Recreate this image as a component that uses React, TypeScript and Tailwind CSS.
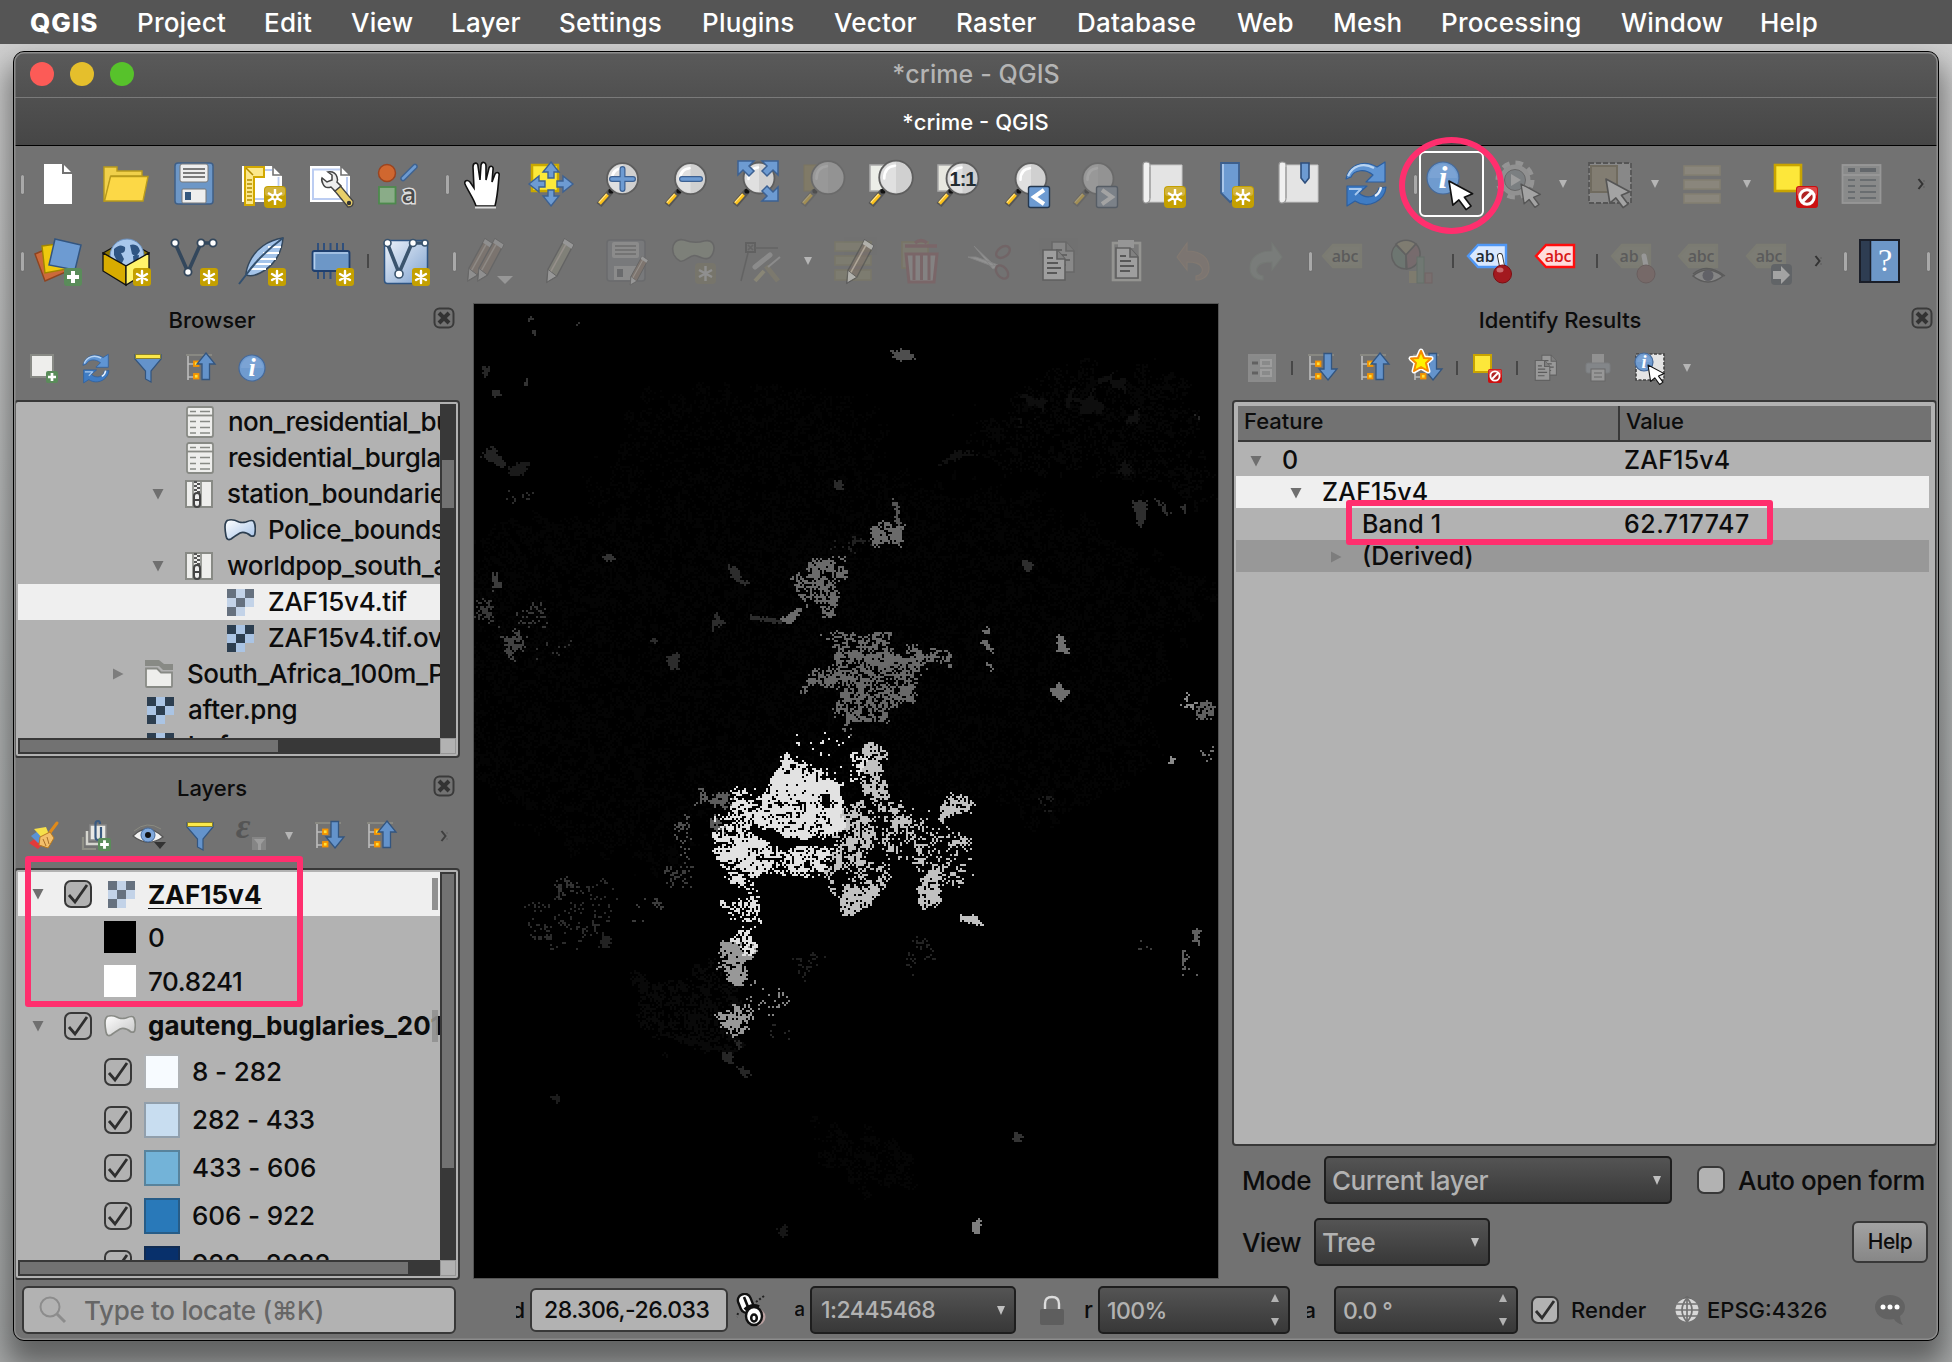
import React from "react";

type Kids = { children?: React.ReactNode };

/* ---------- icon primitives ---------- */

function Ico({ children, dim, faint, size = "lg" }: Kids & { dim?: boolean; faint?: boolean; size?: "lg" | "sm" }) {
  return (
    <svg
      viewBox={size === "lg" ? "0 0 48 48" : "0 0 32 32"}
      className={
        (size === "lg" ? "h-12 w-12 " : "h-8 w-8 ") + "shrink-0 overflow-visible " + (faint ? "opacity-20" : dim ? "opacity-35" : "")
      }
    >
      {children}
    </svg>
  );
}

function StarBadge({ x = 26, y = 26, s = 1 }: { x?: number; y?: number; s?: number }) {
  return (
    <g transform={`translate(${x} ${y}) scale(${s})`}>
      <rect width="22" height="22" rx="4" fill="#c4a000" />
      <rect x="1" y="1" width="20" height="9" rx="3" fill="#d2b43c" />
      <g stroke="#fff" strokeWidth="2.4">
        <path d="M11 3V19M4 7L18 15M18 7L4 15" />
      </g>
      <circle cx="11" cy="11" r="3.6" fill="#fff" />
      <circle cx="11" cy="11" r="1.5" fill="#c4a000" />
    </g>
  );
}

function SoftStar({ x = 30, y = 29 }: { x?: number; y?: number }) {
  return (
    <g transform={`translate(${x} ${y})`}>
      <rect width="18" height="18" rx="3" fill="#c4a000" />
      <g stroke="#fff" strokeWidth="2.4" strokeLinecap="round">
        <path d="M9 3V15M4 6L14 12M14 6L4 12" />
      </g>
    </g>
  );
}

function PlusBadge({ x, y, s }: { x: number; y: number; s: number }) {
  return (
    <g transform={`translate(${x} ${y}) scale(${s / 18})`}>
      <rect width="18" height="18" rx="3" fill="#5a8c5a" />
      <path d="M9 3V15M3 9H15" stroke="#fff" strokeWidth="4" />
    </g>
  );
}

function Cursor({ x, y, s = 1, fill = "#fff", stroke = "#111" }: { x: number; y: number; s?: number; fill?: string; stroke?: string }) {
  return (
    <path
      transform={`translate(${x} ${y}) scale(${s})`}
      d="M0 0L3.5 22L9 17.2L15.5 26L20 22.8L14 14.8L21.5 11.5Z"
      fill={fill}
      stroke={stroke}
      strokeWidth="1.5"
      strokeLinejoin="round"
    />
  );
}

function Lens({ cx = 27.5, cy = 18.7, r = 15.5, children }: Kids & { cx?: number; cy?: number; r?: number }) {
  return (
    <g>
      <path d={`M4 45L16 31`} stroke="#555" strokeWidth="6.5" />
      <path d="M4.5 43.5L12.5 34.5" stroke="#fcc21b" strokeWidth="3.6" />
      <path d="M3.8 42.5L11.5 34" stroke="#ffe9a0" strokeWidth="1.1" />
      <circle cx="16" cy="31" r="2.6" fill="#111" />
      <circle cx={cx} cy={cy} r={r} fill="#d0d0d0" stroke="#5e5e5e" strokeWidth="1.8" />
      <path
        d={`M${cx} ${cy - r + 1.5}A${r - 1.5} ${r - 1.5} 0 0 0 ${cx} ${cy + r - 1.5}Z`}
        fill="#e0e0e0"
      />
      <path d={`M${cx - r + 5} ${cy + 1}Q${cx - r + 5} ${cy - r + 6} ${cx - 1} ${cy - r + 5}`} stroke="#fff" strokeWidth="2.6" fill="none" strokeLinecap="round" />
      {children}
    </g>
  );
}

function Floppy() {
  return (
    <g>
      <rect x="5" y="3" width="38" height="41" rx="3" fill="#6d97c7" stroke="#3f5f87" strokeWidth="1.5" />
      <rect x="10" y="4" width="28" height="18" rx="2" fill="#eee" stroke="#777" />
      <path d="M13 9H35M13 13H35M13 17H35" stroke="#555" strokeWidth="1.6" />
      <rect x="12" y="29" width="24" height="14" rx="1" fill="#eee" stroke="#777" />
      <rect x="15" y="32" width="6" height="8" fill="#35587e" />
    </g>
  );
}

function Pencil({ x = 0, y = 0, s = 1, fill = "#8d7a6a" }: { x?: number; y?: number; s?: number; fill?: string }) {
  return (
    <g transform={`translate(${x} ${y}) scale(${s})`}>
      <path d="M20 2L29 8L12 40L2 46L3 33Z" fill={fill} stroke="#4a4a4a" strokeWidth="1.4" />
      <path d="M3 33L12 40L2 46Z" fill="#ddd" stroke="#4a4a4a" />
      <path d="M20 2L29 8L27 12L18 6Z" fill="#ddd" />
      <path d="M21 8L6 35" stroke="#d9c9b9" strokeWidth="1.6" />
    </g>
  );
}

function RefreshShape() {
  return (
    <g stroke="#2d5f9f" strokeWidth="1.2" strokeLinejoin="round">
      <path d="M3 19C5 7 19 -2 34 7L42 2V22H23L30 15C22 8 11 10 8 17Z" fill="#5f95d4" />
      <path d="M5 16C9 6 20 2 31 8" stroke="#b8d4f2" strokeWidth="2.2" fill="none" />
      <path d="M43 27C42 40 26 50 12 41L4 46V26H24L16 33C24 40 34 37 36 28Z" fill="#3f7cc4" />
      <path d="M6 29H18L12 35" stroke="#a9c9ee" strokeWidth="1.8" fill="none" />
      <path d="M32 36Q37 33 38 27" stroke="#e8f0fa" strokeWidth="2.4" fill="none" />
    </g>
  );
}

function InfoDisc({ cx, cy, r }: { cx: number; cy: number; r: number }) {
  return (
    <g>
      <circle cx={cx} cy={cy} r={r} fill="#6f9bcf" stroke="#45699a" strokeWidth="1.2" />
      <path d={`M${cx - r + 2} ${cy}A${r - 2} ${r - 2} 0 0 1 ${cx + r - 2} ${cy}Z`} fill="#7ba3d4" />
      <text x={cx} y={cy + r * 0.64} textAnchor="middle" fontFamily="Liberation Serif, serif" fontStyle="italic" fontWeight="700" fontSize={r * 2} fill="#fff">
        i
      </text>
    </g>
  );
}

function Scroll() {
  return (
    <g>
      <path d="M9 5H43V42H9Z" fill="#e4e4e4" stroke="#c6c6c6" />
      <path d="M4 5Q4 2 7 2Q11 2 11 5V38Q11 43 7 43Q3.500 43 4 38Z" fill="#f0f0f0" stroke="#999" strokeWidth="1.2" />
      <path d="M11 7V38" stroke="#aaa" strokeWidth="1.5" />
    </g>
  );
}

function NoBadge({ x, y, s }: { x: number; y: number; s: number }) {
  return (
    <g transform={`translate(${x} ${y}) scale(${s / 22})`}>
      <rect width="22" height="22" rx="3" fill="#cc0f0f" />
      <rect x="1" y="1" width="20" height="9" rx="2" fill="#dd4a4a" />
      <circle cx="11" cy="11" r="7.2" fill="#b02222" stroke="#fff" strokeWidth="3" />
      <path d="M6 16L16 6" stroke="#fff" strokeWidth="3.2" />
    </g>
  );
}

function Tag({ text, fill, stroke, color }: { text: string; fill: string; stroke: string; color: string }) {
  return (
    <g>
      <path d="M2 18L12 7H40V29H12Z" fill={fill} stroke={stroke} strokeWidth="2.4" />
      <text x="24" y="24" textAnchor="middle" fontFamily="Open Sans, sans-serif" fontWeight="600" fontSize="16" letterSpacing="-0.3" fill={color}>
        {text}
      </text>
    </g>
  );
}

function Doc({ x, y }: { x: number; y: number }) {
  return (
    <g transform={`translate(${x} ${y})`}>
      <path d="M0 0H14L22 9V30H0Z" fill="#e0e0e0" stroke="#444" strokeWidth="1.6" />
      <path d="M14 0V9H22" fill="#999" stroke="#444" strokeWidth="1.6" />
      <path d="M4 8H10M4 13H15M4 18H18M4 23H14" stroke="#333" strokeWidth="1.8" />
    </g>
  );
}

function VNodes({ color = "#33475c" }: { color?: string }) {
  return (
    <g stroke={color} strokeWidth="3.6" fill="none">
      <path d="M5 8L18 37L31 8H44" />
      <g fill="#fff" strokeWidth="1.8">
        <circle cx="5" cy="8" r="3.6" />
        <circle cx="18" cy="37" r="3.6" />
        <circle cx="31" cy="8" r="3.6" />
        <circle cx="43" cy="8" r="3.6" />
      </g>
    </g>
  );
}

/* ---------- toolbar pieces ---------- */

function Cell({ children }: Kids) {
  return <div className="flex w-[68px] shrink-0 items-center justify-center">{children}</div>;
}

function Handle({ className }: { className: string }) {
  return (
    <div className={"flex shrink-0 items-center justify-end " + className}>
      <div className="h-[19px] w-[3px] rounded-full bg-[#a9a9a9] shadow-[0_0_1px_#555]" />
    </div>
  );
}

function Sep({ className }: { className: string }) {
  return (
    <div className={"flex shrink-0 items-center justify-center " + className}>
      <div className="h-[14px] w-[2px] bg-[#474747]" />
    </div>
  );
}

function Drop({ className, color = "#b5b5b5" }: { className: string; color?: string }) {
  return (
    <div className={"flex shrink-0 items-center justify-center " + className}>
      <svg viewBox="0 0 8 8" className="h-2 w-2">
        <path d="M0 0H8L4 8Z" fill={color} />
      </svg>
    </div>
  );
}

function More({ className }: { className: string }) {
  return (
    <div className={"flex shrink-0 items-center justify-center " + className}>
      <svg viewBox="0 0 8 12" className="h-3 w-2">
        <path d="M1.500 1L5.500 6L1.500 11" stroke="#333" strokeWidth="2" fill="none" />
        <path d="M7 2V4M7 8V10" stroke="#606060" strokeWidth="1.200" />
      </svg>
    </div>
  );
}

function ToolbarOne() {
  return (
    <div className="flex h-[76px] items-center">
      <Handle className="w-[10px]" />
      <Cell><Ico><path d="M10 4H28V14H38V44H10Z" fill="#fff" /><path d="M30 5L37 12H30Z" fill="#fff" /></Ico></Cell>
      <Cell>
        <Ico>
          <path d="M2 7H15V11H40V16H9L3 41H2Z" fill="#f0d04a" stroke="#b89a1c" strokeWidth="1.4" />
          <path d="M8.500 16.500H46L41 41H2.500Z" fill="#fcd846" stroke="#b89a1c" strokeWidth="1.4" />
        </Ico>
      </Cell>
      <Cell><Ico><Floppy /></Ico></Cell>
      <Cell>
        <Ico>
          <path d="M4 6H34L44 16V42H4Z" fill="#fff" />
          <path d="M35 6V15H44Z" fill="#fff" stroke="#727272" strokeWidth="1.6" />
          <path d="M8 10H34M40.500 17V39H8" stroke="#bccdf2" strokeWidth="1.8" fill="none" />
          <path d="M7 7H26V17H16V45H7Z" fill="#fce88a" stroke="#d2a800" strokeWidth="2" />
          <path d="M8 8L15 15M9 20H14M9 24H14M9 28H14M9 32H14M9 36H14M9 40H14" stroke="#b08a00" strokeWidth="1.5" />
          <StarBadge />
        </Ico>
      </Cell>
      <Cell>
        <Ico>
          <path d="M4 6H34L44 16V42H4Z" fill="#fff" />
          <path d="M35 6V15H44Z" fill="#fff" stroke="#727272" strokeWidth="1.600" />
          <path d="M34 9.500H7V39H41V17" stroke="#bccdf2" strokeWidth="2" fill="none" />
          <path d="M28 30L34 25.500L47 41Q48 47 42 47Z" fill="#e8cf6a" stroke="#444" strokeWidth="1.300" />
          <circle cx="43" cy="43" r="2.200" fill="#333" />
          <path d="M22 12Q29 11 31 17Q32 20 31 22L35 26L29 31L25 27Q19 29 17 24Q15 20 16 18L21 22L26 20V15Z" fill="#eee" stroke="#444" strokeWidth="1.500" />
        </Ico>
      </Cell>
      <Cell>
        <Ico>
          <circle cx="13" cy="13" r="8.500" fill="#d0672f" stroke="#9a4420" strokeWidth="1.500" />
          <path d="M29 18.500L41 6.500" stroke="#3f6390" strokeWidth="5.500" strokeLinecap="round" />
          <path d="M29 18.500L41 6.500" stroke="#6d9bd2" strokeWidth="2.600" strokeLinecap="round" />
          <rect x="5" y="27" width="16.500" height="16.500" fill="#8aac88" stroke="#4d8a4d" strokeWidth="1.800" />
          <text x="35" y="43" textAnchor="middle" fontFamily="Open Sans, sans-serif" fontWeight="600" fontSize="25" fill="#4a4a4a" stroke="#ddd" strokeWidth="3" paintOrder="stroke">a</text>
        </Ico>
      </Cell>
      <Handle className="w-[17px]" />
      <Cell>
        <Ico>
          <path d="M17 46C15 39 9 31 6 24C5 21 8 19 11 22L15 28L14 7C14 2 19 2 19 6L21 20L22 5C23 1 27 2 27 6V20L30 8C31 5 35 6 34 10L33 22L36 14C38 11 41 13 40 16C39 26 39 34 36 46Z" fill="#fff" stroke="#111" strokeWidth="1.600" />
          <path d="M16 47.500H37" stroke="#ddd" strokeWidth="2" />
        </Ico>
      </Cell>
      <Cell>
        <Ico>
          <rect x="5" y="5" width="26" height="26" fill="#fde93a" stroke="#c9a800" strokeWidth="2.500" />
          <g fill="#6d9bd2" stroke="#3d6192" strokeWidth="1.400">
            <path d="M24 2L32 12H27V18H21V12H16Z" />
            <path d="M24 46L32 36H27V30H21V36H16Z" />
            <path d="M2 24L12 16V21H18V27H12V32Z" />
            <path d="M46 24L36 16V21H30V27H36V32Z" />
          </g>
        </Ico>
      </Cell>
      <Cell>
        <Ico>
          <Lens>
            <path d="M27.500 9V29M17 19H38" stroke="#3d6192" strokeWidth="6" strokeLinecap="round" />
            <path d="M27.500 9V29M17 19H38" stroke="#6d9bd2" strokeWidth="3.600" strokeLinecap="round" />
          </Lens>
        </Ico>
      </Cell>
      <Cell>
        <Ico>
          <Lens>
            <path d="M19 19H37" stroke="#3d6192" strokeWidth="6" strokeLinecap="round" />
            <path d="M19 19H37" stroke="#6d9bd2" strokeWidth="3.600" strokeLinecap="round" />
          </Lens>
        </Ico>
      </Cell>
      <Cell>
        <Ico>
          <Lens cx={28} cy={18} />
          <g fill="#6d9bd2" stroke="#3d6192" strokeWidth="1.500">
            <path d="M7 1H23L18 6L23 11L18 16L12 10L7 15Z" />
            <path d="M47 1H31L36 6L31 11L36 16L42 10L47 15Z" />
            <path d="M47 41H31L36 36L31 31L36 26L42 32L47 27Z" />
          </g>
        </Ico>
      </Cell>
      <Cell><Ico dim><rect x="5" y="5" width="24" height="26" fill="#9b8a55" stroke="#8a7a40" /><Lens cx={29} cy={17.700} r={16.500} /></Ico></Cell>
      <Cell><Ico><rect x="3" y="5" width="24" height="26" fill="#eceee8" stroke="#aaa" strokeWidth="1.500" /><Lens cx={29} cy={17.500} r={16.800} /></Ico></Cell>
      <Cell>
        <Ico>
          <rect x="3" y="5" width="24" height="26" fill="#e8e8e0" stroke="#aaa" strokeWidth="1.500" />
          <Lens cx={27.500} cy={18.500} r={16}>
            <text x="27.500" y="25.500" textAnchor="middle" fontFamily="Liberation Sans, sans-serif" fontWeight="700" fontSize="20" letterSpacing="-1" fill="#222b30">1:1</text>
          </Lens>
        </Ico>
      </Cell>
      <Cell>
        <Ico>
          <Lens cx={28} cy={18.700} />
          <rect x="25.500" y="26.500" width="21" height="21" rx="2" fill="#6d9bd2" stroke="#25384f" strokeWidth="1.400" />
          <path d="M41 30L31 37L41 44" stroke="#fff" strokeWidth="4" fill="none" />
        </Ico>
      </Cell>
      <Cell>
        <Ico dim>
          <Lens cx={27} cy={18.700} />
          <rect x="25.500" y="26.500" width="21" height="21" rx="2" fill="#8d9db2" stroke="#25384f" strokeWidth="1.400" />
          <path d="M31 30L41 37L31 44" stroke="#fff" strokeWidth="4" fill="none" />
        </Ico>
      </Cell>
      <Cell><Ico><Scroll /><StarBadge x={25} /></Ico></Cell>
      <Cell>
        <Ico>
          <path d="M14 3H32V36L23 42L14 33Z" fill="#6d9bd2" stroke="#3d5f8c" strokeWidth="1.800" />
          <path d="M16 4V32" stroke="#a9c6ea" strokeWidth="2" />
          <StarBadge x={25} />
        </Ico>
      </Cell>
      <Cell>
        <Ico>
          <Scroll />
          <path d="M26 3H34V18L30 23L26 18Z" fill="#6d9bd2" stroke="#2f4f7c" strokeWidth="1.600" />
        </Ico>
      </Cell>
      <Cell><Ico><RefreshShape /></Ico></Cell>
      <Handle className="w-4" />
      <div className="relative flex w-[68px] shrink-0 items-center justify-center">
        <div className="flex h-[66px] w-[65px] items-center justify-center rounded-[6px] border-2 border-white bg-[#6c6c6c]">
          <Ico><InfoDisc cx={16} cy={18} r={16} /><Cursor x={22} y={21} s={1.1} /></Ico>
        </div>
        <div className="absolute -top-[14px] -left-[18px] z-20 h-[97px] w-[105px] rounded-[50%] border-[6px] border-[#ff2f6e]" />
      </div>
      <div className="flex w-[66px] items-center justify-center">
        <Ico dim>
          <circle cx="21" cy="20" r="16" fill="none" stroke="#d5d5d5" strokeWidth="7" strokeDasharray="7 5.560" />
          <circle cx="21" cy="20" r="13" fill="#b9c0c8" stroke="#ccc" strokeWidth="5" />
          <circle cx="21" cy="20" r="10.500" fill="#8e979f" stroke="#555" />
          <path d="M17 14L27 20L17 26Z" fill="#eee" />
          <Cursor x={27} y={24} s={0.9} stroke="#222" />
        </Ico>
      </div>
      <Drop className="w-6" />
      <div className="flex w-[70px] items-center justify-center">
        <Ico dim>
          <rect x="3" y="3" width="42" height="40" fill="#ddd" fillOpacity=".6" stroke="#222" strokeWidth="1.800" strokeDasharray="5 2" />
          <rect x="5" y="6" width="26" height="26" fill="#a09274" stroke="#6d5f3c" strokeWidth="2" />
          <Cursor x={20} y={19} s={1.100} stroke="#222" />
        </Ico>
      </div>
      <Drop className="w-5" />
      <div className="flex w-[72px] items-center justify-center">
        <Ico dim>
          <g fill="#b8ab90" stroke="#a39670" strokeWidth="1.600">
            <rect x="7" y="6" width="36" height="9" /><rect x="7" y="20" width="36" height="9" /><rect x="7" y="34" width="36" height="9" />
          </g>
        </Ico>
      </div>
      <Drop className="w-5" />
      <div className="flex w-[74px] items-center justify-center">
        <Ico><rect x="5" y="5" width="26" height="26" fill="#fde73a" stroke="#c9a400" strokeWidth="2.600" /><NoBadge x={26} y={26} s={22} /></Ico>
      </div>
      <div className="flex w-[62px] items-center justify-center">
        <Ico dim>
          <rect x="4.500" y="5" width="38" height="38" fill="#b5b8b8" stroke="#ddd" strokeWidth="1.800" />
          <path d="M5 15H42" stroke="#ddd" strokeWidth="2" />
          <path d="M10 10H17M22 10H38" stroke="#4a5560" strokeWidth="4" />
          <path d="M10 20H17M22 20H38M10 26H17M22 26H38M10 32H17M22 32H38M10 38H17M22 38H38" stroke="#5a656e" strokeWidth="2" />
        </Ico>
      </div>
      <More className="ml-5 w-4" />
    </div>
  );
}

function ToolbarTwo() {
  return (
    <div className="flex h-[78px] items-center">
      <Handle className="w-[10px]" />
      <Cell>
        <Ico>
          <path d="M1 17L22 8L34 34L11 44Z" fill="#cc6a3a" stroke="#8e4420" strokeWidth="1.400" />
          <path d="M8 9L30 6L33 32L11 36Z" fill="#eec90e" stroke="#a08500" strokeWidth="1.400" />
          <path d="M21 2L47 8L41 33L15 28Z" fill="#6d9bd2" stroke="#33557f" strokeWidth="1.500" />
          <PlusBadge x={30} y={31} s={18} />
        </Ico>
      </Cell>
      <Cell>
        <Ico>
          <path d="M1 16L24 3L47 16L24 29Z" fill="#8a7400" stroke="#111" strokeWidth="1.300" />
          <circle cx="25" cy="19" r="17" fill="#a9c8ec" stroke="#6a8fbd" />
          <path d="M12 12Q18 6 23 10Q24 16 19 16L22 22L18 30Q14 22 12 18ZM28 8Q36 6 38 14L34 20L30 17ZM31 19L37 18L36 27L32 30Z" fill="#2f5583" />
          <path d="M1 16L24 29V48L1 34Z" fill="#d8ac00" stroke="#111" strokeWidth="1.300" />
          <path d="M47 16L24 29V48L47 34Z" fill="#fff36a" stroke="#111" strokeWidth="1.300" />
          <SoftStar x={31} y={31} />
        </Ico>
      </Cell>
      <Cell><Ico><g transform="translate(0 -2)"><VNodes /></g><SoftStar x={30} y={31} /></Ico></Cell>
      <Cell>
        <Ico>
          <path d="M45 1C30 3 18 12 12 24Q8 32 8 38Q14 40 22 36Q32 31 38 22Q44 13 45 1Z" fill="#a4c4ea" stroke="#33475c" strokeWidth="1.500" />
          <path d="M30 10H43M25 16H41M20 22H38M16 27H33M13 32H28" stroke="#fff" strokeWidth="2" />
          <path d="M45 1Q22 18 8 38L1 47" stroke="#33506f" strokeWidth="2" fill="none" />
          <SoftStar x={30} y={31} />
        </Ico>
      </Cell>
      <Cell>
        <Ico>
          <path d="M12 6V42M18 6V42M24.500 6V42M31 6V42M37 6V42" stroke="#2f4f7c" strokeWidth="2" />
          <rect x="6.500" y="14" width="37" height="20" rx="2" fill="#6d97c7" stroke="#1f3f6e" strokeWidth="1.800" />
          <path d="M8.500 32V16H42" stroke="#b3cdec" strokeWidth="1.600" fill="none" />
          <SoftStar x={30} y={31} />
        </Ico>
      </Cell>
      <Sep className="w-2" />
      <Cell>
        <Ico>
          <defs><linearGradient id="vl" x1="0" y1="0" x2="1" y2="1"><stop offset="0" stopColor="#eef3fa" /><stop offset="1" stopColor="#7ea2d0" /></linearGradient></defs>
          <rect x="2.500" y="3.500" width="43" height="43" rx="3" fill="url(#vl)" stroke="#2f5583" strokeWidth="1.500" />
          <path d="M6 8L17 36L30 6H44" stroke="#3a546e" strokeWidth="3.600" fill="none" />
          <g fill="#fff" stroke="#3a546e" strokeWidth="1.600"><circle cx="5.500" cy="6" r="3.500" /><circle cx="17" cy="37" r="4" /><circle cx="31" cy="6" r="3.500" /><circle cx="43" cy="6" r="3" /></g>
          <SoftStar x={30} y={31} />
        </Ico>
      </Cell>
      <Handle className="w-4" />
      <Cell>
        <Ico dim>
          <g opacity=".8"><Pencil x={0} y={0} s={0.95} fill="#957b6a" /><Pencil x={10} y={0} s={0.95} fill="#957b6a" /></g>
          <path d="M31 39H47L39 47Z" fill="#ddd" />
        </Ico>
      </Cell>
      <Cell><Ico dim><Pencil x={11} y={0} s={0.98} fill="#9a9a85" /></Ico></Cell>
      <Cell>
        <Ico dim>
          <rect x="5" y="3" width="38" height="41" rx="3" fill="#84888c" stroke="#5c5f66" strokeWidth="1.500" />
          <rect x="10" y="5" width="27" height="16" rx="2" fill="#bbb" /><path d="M13 9H34M13 13H34M13 17H34" stroke="#666" strokeWidth="1.600" />
          <rect x="12" y="29" width="23" height="14" fill="#bbb" /><rect x="15" y="32" width="6" height="8" fill="#5c6066" />
          <Pencil x={27} y={18} s={0.65} fill="#957b6a" />
        </Ico>
      </Cell>
      <Cell>
        <Ico dim>
          <path d="M4 18C0 8 6 1 14 3C22 6 28 6 34 4C42 2 46 8 43 16C40 24 34 22 27 19C20 16 16 26 10 24Q6 22 4 18Z" fill="#929a88" stroke="#555" strokeWidth="1.600" />
          <g opacity=".6"><rect x="25" y="26" width="21" height="21" rx="4" fill="#8f8555" /><path d="M35.500 29V44M29 33L42 40M42 33L29 40" stroke="#fff" strokeWidth="2.400" /></g>
        </Ico>
      </Cell>
      <Cell>
        <Ico dim>
          <rect x="8" y="6" width="9" height="9" fill="none" stroke="#444" strokeWidth="2" />
          <path d="M10 8L15 13M15 8L10 13M17 11H40M10 16L3 44" stroke="#4a4a4a" strokeWidth="1.600" />
          <path d="M17 44L26 34" stroke="#b5ab80" strokeWidth="4" /><path d="M28 29L40 44" stroke="#8f8868" strokeWidth="5" />
          <path d="M17 30L32 18" stroke="#bbb" strokeWidth="5" strokeLinecap="round" /><path d="M30 30L42 20" stroke="#bbb" strokeWidth="2" />
        </Ico>
      </Cell>
      <Drop className="w-6" />
      <Cell>
        <Ico dim>
          <g fill="#94906f" stroke="#85805a" strokeWidth="1.600"><rect x="5" y="5" width="36" height="9" /><rect x="5" y="19" width="36" height="9" /><rect x="5" y="33" width="36" height="10" /></g>
        </Ico>
        <div className="-ml-12 opacity-55"><Ico><Pencil x={15} y={1} s={0.98} fill="#7d7069" /></Ico></div>
      </Cell>
      <Cell>
        <Ico dim>
          <rect x="4" y="5" width="26" height="26" fill="#8f8a70" stroke="#857c50" strokeWidth="1.600" />
          <path d="M7 9H39M17 6Q23 1 29 6" stroke="#895058" strokeWidth="3.500" fill="none" />
          <path d="M8 17H39L36 45H11Z" fill="#a8a0a0" stroke="#895058" strokeWidth="3" />
          <path d="M16 18V43M23.500 18V43M31 18V43" stroke="#895058" strokeWidth="3" />
        </Ico>
      </Cell>
      <Cell>
        <Ico dim>
          <path d="M2 20H10L32 28L26 29ZM8 9L30 30L27 32Z" fill="#ccc" stroke="#aaa" />
          <ellipse cx="37" cy="15" rx="7.500" ry="5" transform="rotate(-35 37 15)" fill="none" stroke="#704c50" strokeWidth="2.400" />
          <ellipse cx="36" cy="35" rx="7.500" ry="5" transform="rotate(50 36 35)" fill="none" stroke="#704c50" strokeWidth="2.400" />
        </Ico>
      </Cell>
      <Cell><div className="opacity-40"><Ico><g opacity=".5"><Doc x={18} y={5} /></g><Doc x={9} y={13} /></Ico></div></Cell>
      <Cell>
        <div className="opacity-40">
          <Ico>
            <rect x="11" y="6" width="27" height="37" fill="#888" stroke="#c8c8c0" strokeWidth="2.600" />
            <rect x="16" y="3" width="16" height="8" fill="#ccc" /><Doc x={14} y={11} />
          </Ico>
        </div>
      </Cell>
      <Cell><Ico dim><path d="M7 20L17 6V14C31 14 39 21 39 31C39 39 33 43 26 43V39C32 38 33 34 32 31C30 26 25 25 17 25V33Z" fill="#8f7c70" stroke="#a08670" strokeWidth="1.200" /></Ico></Cell>
      <Cell><Ico dim><path d="M44 20L34 6V14C20 14 12 21 12 31C12 39 18 43 25 43V39C19 38 18 34 19 31C21 26 26 25 34 25V33Z" fill="#87918a" stroke="#7b867c" strokeWidth="1.200" /></Ico></Cell>
      <Handle className="w-4" />
      <Cell><Ico dim><g transform="translate(-1 1)"><Tag text="abc" fill="#8f8f7a" stroke="#8d8d72" color="#333" /></g></Ico></Cell>
      <Cell>
        <Ico dim>
          <path d="M16 18L16 32A14 14 0 0 1 6 8Z" fill="#647f70" stroke="#444" strokeWidth="1.600" />
          <path d="M16 18L6 7A15 15 0 0 1 26 7Z" fill="#98906f" stroke="#444" strokeWidth="1.600" />
          <path d="M16 18L26 7A15 15 0 0 1 17 32Z" fill="#806064" stroke="#444" strokeWidth="1.600" />
          <rect x="19" y="34" width="8" height="12" fill="#958d68" /><rect x="27" y="20" width="7" height="26" fill="#6f8575" stroke="#4c6a58" /><rect x="35" y="36" width="7" height="10" fill="#856a6a" stroke="#704c4c" />
        </Ico>
      </Cell>
      <Sep className="w-[10px]" />
      <Cell>
        <Ico>
          <g transform="translate(-2 1)">
            <path d="M2 18L12 7H40V29H12Z" fill="#d8e8ff" stroke="#4f97f5" strokeWidth="2.4" />
            <text x="19" y="24" textAnchor="middle" fontFamily="Open Sans, sans-serif" fontWeight="600" fontSize="16" fill="#222b33">ab</text>
            <path d="M34 18L36 28" stroke="#333" strokeWidth="6" strokeLinecap="round" /><path d="M34 18L36 28" stroke="#fff" strokeWidth="4" strokeLinecap="round" />
            <circle cx="36.500" cy="36" r="9" fill="#a3191f" stroke="#7d0c10" /><ellipse cx="34" cy="32" rx="3.500" ry="2.500" fill="#c96a6e" />
          </g>
        </Ico>
      </Cell>
      <div className="flex w-[66px] items-center justify-center"><Ico><g transform="translate(-1 1)"><Tag text="abc" fill="#ffdcdc" stroke="#ff0d0d" color="#d81818" /></g></Ico></div>
      <Sep className="w-[10px]" />
      <Cell>
        <Ico dim>
          <g transform="translate(-2 1)">
            <path d="M2 18L12 7H40V29H12Z" fill="#8f8f7a" stroke="#8d8d72" strokeWidth="2.4" />
            <text x="19" y="24" textAnchor="middle" fontFamily="Open Sans, sans-serif" fontWeight="600" fontSize="16" fill="#333">ab</text>
            <path d="M34 18L36 28" stroke="#ddd" strokeWidth="5" strokeLinecap="round" />
            <circle cx="36" cy="36" r="9" fill="#7e5a58" stroke="#5a3a3a" />
          </g>
        </Ico>
      </Cell>
      <Cell>
        <Ico dim>
          <g transform="translate(-3 1)">
            <Tag text="abc" fill="#8f8f7a" stroke="#8d8d72" color="#333" />
            <path d="M16 38Q30 26 46 38Q31 50 16 38Z" fill="#aaa" stroke="#333" strokeWidth="1.600" />
            <circle cx="31" cy="37.500" r="5.500" fill="#445" /><path d="M16 36Q30 24 48 38" stroke="#333" strokeWidth="1.400" fill="none" />
          </g>
        </Ico>
      </Cell>
      <Cell>
        <Ico dim>
          <g transform="translate(-3 1)">
            <Tag text="abc" fill="#8f8f7a" stroke="#8d8d72" color="#333" />
            <rect x="26" y="26" width="21" height="21" rx="4" fill="#444c54" />
            <path d="M28 33H36V28L45 37L36 46V41H28Z" fill="#fff" />
          </g>
        </Ico>
      </Cell>
      <More className="w-6" />
      <Handle className="w-[17px]" />
      <Cell>
        <Ico>
          <rect x="3" y="3" width="39" height="42" fill="#6d97c7" stroke="#1a1e28" strokeWidth="2" />
          <rect x="4" y="4" width="9" height="40" fill="#2e3d52" /><path d="M13.500 4V44" stroke="#1a1e28" strokeWidth="1.500" />
          <text x="28" y="34" textAnchor="middle" fontFamily="Liberation Serif, serif" fontSize="32" fill="#fff">?</text>
        </Ico>
      </Cell>
      <Handle className="w-[15px]" />
    </div>
  );
}

/* ---------- small icons ---------- */

function TreeIcon({ up }: { up?: boolean }) {
  return (
    <Ico size="sm">
      <path d="M2 3H28" stroke="#8e8e86" strokeWidth="1.600" />
      <path d="M4 4V28M4 12H10M4 25H10" stroke="#bcbcbc" strokeWidth="1.600" fill="none" />
      <rect x="10" y="9.500" width="4.500" height="4.500" fill="#fde23a" stroke="#f59300" strokeWidth="1.800" />
      <rect x="10" y="22" width="4.500" height="4.500" fill="#fde23a" stroke="#f59300" strokeWidth="1.800" />
      {up ? (
        <path d="M22 1L31 12H25.500V27.500H18V12H13Z" fill="#6493cb" stroke="#33557f" strokeWidth="1.300" />
      ) : (
        <path d="M22 28L31 17H25.500V1.500H18V17H13Z" fill="#6493cb" stroke="#33557f" strokeWidth="1.300" />
      )}
    </Ico>
  );
}

function FilterIcon() {
  return (
    <Ico size="sm">
      <path d="M3 2.500H29V7L19 19V30L13.500 27V19L3 7Z" fill="#6493cb" stroke="#33557f" strokeWidth="1.200" />
      <path d="M3.500 2.500H28.500V6.500H3.500Z" fill="#fbe84a" stroke="#8a7f2a" />
    </Ico>
  );
}

function Close() {
  return (
    <svg viewBox="0 0 22 22" className="h-[22px] w-[22px]">
      <rect x="1.500" y="1.500" width="19" height="19" rx="5" fill="#727272" stroke="#3a3a3a" strokeWidth="2" />
      <path d="M6 6L16 16M16 6L6 16" stroke="#333" strokeWidth="4" />
    </svg>
  );
}

function PanelTitle({ text, className }: { text: string; className: string }) {
  return (
    <div className={"relative flex h-10 items-center justify-center text-[22px] text-[#0c0c0c] " + className}>
      {text}
      <div className="absolute top-[7px] right-[5px]"><Close /></div>
    </div>
  );
}

function Slot({ children, className = "w-[52px]" }: Kids & { className?: string }) {
  return <div className={"flex shrink-0 items-center justify-center " + className}>{children}</div>;
}

/* ---------- tree rows ---------- */

function Tri({ open }: { open?: boolean }) {
  return (
    <svg viewBox="0 0 12 12" className="h-3 w-3 shrink-0">
      {open ? <path d="M0.500 1H11.500L6 11.500Z" fill="#6f6f6f" /> : <path d="M1 0.500V11.500L11.500 6Z" fill="#7d7d7d" />}
    </svg>
  );
}

function RasterIcon({ faded }: { faded?: boolean }) {
  const dark = faded ? "#66717f" : "#2c3e50";
  const light = faded ? "#c3d3e8" : "#aac4e4";
  return (
    <svg viewBox="0 0 27 27" className="h-[27px] w-[27px] shrink-0" shapeRendering="crispEdges">
      <path d="M0 0H9V9H0ZM18 0H27V9H18ZM9 9H18V18H9ZM0 18H9V27H0Z" fill={dark} />
      <path d="M9 0H18V9H9ZM0 9H9V18H0ZM18 9H27V18H18ZM9 18H18V27H9Z" fill={light} />
    </svg>
  );
}

function TableIcon() {
  return (
    <svg viewBox="0 0 28 32" className="h-8 w-7 shrink-0">
      <rect x="1" y="1" width="26" height="30" rx="2" fill="#eeeeec" stroke="#888a85" strokeWidth="1.800" />
      <path d="M1 9.500H27" stroke="#888a85" strokeWidth="1.800" />
      <path d="M4 5.500H10M14 5.500H24M4 15.500H10M14 15.500H24M4 21.500H10M14 21.500H24M4 27H10M14 27H24" stroke="#888a85" strokeWidth="1.600" />
    </svg>
  );
}

function ZipIcon() {
  return (
    <svg viewBox="0 0 28 28" className="h-7 w-7 shrink-0">
      <rect x="1" y="1" width="26" height="26" fill="#eeeeec" stroke="#888a85" strokeWidth="2" />
      <path d="M8 1V27M16 1V27" stroke="#888a85" strokeWidth="1.600" />
      <path d="M10.500 1V12" stroke="#555" strokeWidth="3" strokeDasharray="2 2" />
      <path d="M13.500 3V13" stroke="#555" strokeWidth="3" strokeDasharray="2 2" />
      <rect x="9" y="13" width="6" height="14" rx="3" fill="#eee" stroke="#444" strokeWidth="2" />
      <path d="M9 20H15" stroke="#444" strokeWidth="2" />
    </svg>
  );
}

function PolyIcon({ gray }: { gray?: boolean }) {
  return (
    <svg viewBox="0 0 32 24" className="h-6 w-8 shrink-0">
      <defs>
        <linearGradient id={gray ? "pg" : "pb"} x1="0" y1="0" x2="1" y2="1">
          <stop offset="0" stopColor="#fff" /><stop offset="1" stopColor={gray ? "#c4c4c4" : "#a3c2e8"} />
        </linearGradient>
      </defs>
      <path d="M5 2Q9 1 15 4Q18 5 22 4Q29 1 30 4Q32 8 31 15Q31 19 27 18Q21 13 16 15Q11 18 7 21Q3 23 2 18Q0 7 2 4Q3 2 5 2Z" fill={gray ? "url(#pg)" : "url(#pb)"} stroke={gray ? "#888a85" : "#2c3e50"} strokeWidth="1.700" />
    </svg>
  );
}

function FolderIcon() {
  return (
    <svg viewBox="0 0 28 28" className="h-7 w-7 shrink-0">
      <path d="M0 0H14L19 4H28V10H18L14 6H0Z" fill="#888a85" />
      <path d="M1 8.500H12L16 12.500H27V26Q27 27 26 27H2Q1 27 1 26Z" fill="#eeeeec" stroke="#888a85" strokeWidth="1.800" />
    </svg>
  );
}

function BrowserRow({ pad, tri, icon, text, tight, selected }: { pad: string; tri?: "open" | "closed"; icon: React.ReactNode; text: string; tight?: string; selected?: boolean }) {
  return (
    <div className={"flex h-9 shrink-0 items-center whitespace-nowrap text-[26px] text-[#0c0c0c] " + pad + (selected ? " bg-[#efefef]" : "")}>
      <div className="flex w-[33px] shrink-0 justify-start">{tri && <Tri open={tri === "open"} />}</div>
      <div className="flex w-[28px] shrink-0 items-center justify-center">{icon}</div>
      <span className={"ml-[14px] -mt-[2px] " + (tight ?? "tracking-[-0.25px]")}>{text}</span>
    </div>
  );
}

function ScrollFrame({ children, className, vThumb, hThumb }: Kids & { className: string; vThumb: string; hThumb: string }) {
  return (
    <div className={"flex flex-col rounded-[4px] border-2 border-[#383838] bg-[#b2b2b2] p-[2px] " + className}>
      <div className="flex min-h-0 flex-1">
        <div className="flex w-[422px] flex-col overflow-hidden">{children}</div>
        <div className="w-4 bg-[#383838] px-[2px]"><div className={"bg-[#727272] " + vThumb} /></div>
      </div>
      <div className="flex h-4 shrink-0">
        <div className="w-[422px] bg-[#383838] p-[2px]"><div className={"h-full bg-[#727272] " + hThumb} /></div>
        <div className="w-4 border border-[#959595] bg-[#b2b2b2]" />
      </div>
    </div>
  );
}

function Check({ on, className = "" }: { on?: boolean; className?: string }) {
  return (
    <div className={"flex h-7 w-7 shrink-0 items-center justify-center rounded-[7px] border-2 border-[#383838] bg-[#b2b2b2] " + className}>
      {on && (
        <svg viewBox="0 0 24 24" className="h-6 w-6"><path d="M3 13L9 20L21 3" stroke="#2e2e2e" strokeWidth="2.800" fill="none" /></svg>
      )}
    </div>
  );
}

const classes = [
  { label: "8 - 282", fill: "bg-[#f7fbff]" },
  { label: "282 - 433", fill: "bg-[#c8ddf0]" },
  { label: "433 - 606", fill: "bg-[#73b3d8]" },
  { label: "606 - 922", fill: "bg-[#2979b9]" },
  { label: "922 - 2082", fill: "bg-[#08306b]" },
];

function LeftColumn() {
  return (
    <div className="flex w-[446px] shrink-0 flex-col">
      <PanelTitle text="Browser" className="pr-[50px]" />
      <div className="flex h-[60px] items-center pb-1 pl-[4px]">
        <Slot>
          <Ico size="sm"><rect x="3" y="3" width="22" height="22" fill="#eeeeec" stroke="#888a85" strokeWidth="2" /><PlusBadge x={18} y={19} s={12} /></Ico>
        </Slot>
        <Slot><Ico size="sm"><g transform="translate(1 1) scale(.65)"><RefreshShape /></g></Ico></Slot>
        <Slot><FilterIcon /></Slot>
        <Slot><TreeIcon up /></Slot>
        <Slot><Ico size="sm"><InfoDisc cx={16} cy={16} r={13} /></Ico></Slot>
      </div>
      <ScrollFrame className="h-[358px]" vThumb="mt-14 h-12" hThumb="w-[258px]">
        <BrowserRow pad="pl-[135px]" icon={<TableIcon />} text="non_residential_burglary" tight="tracking-[-0.6px]" />
        <BrowserRow pad="pl-[135px]" icon={<TableIcon />} text="residential_burglary" tight="tracking-[-0.45px]" />
        <BrowserRow pad="pl-[134px]" tri="open" icon={<ZipIcon />} text="station_boundaries" tight="tracking-[-0.35px]" />
        <BrowserRow pad="pl-[175px]" icon={<PolyIcon />} text="Police_bounds" tight="tracking-[-0.4px]" />
        <BrowserRow pad="pl-[134px]" tri="open" icon={<ZipIcon />} text="worldpop_south_africa" tight="tracking-[-0.35px]" />
        <BrowserRow pad="pl-[175px]" icon={<RasterIcon faded />} text="ZAF15v4.tif" selected />
        <BrowserRow pad="pl-[175px]" icon={<RasterIcon />} text="ZAF15v4.tif.ovr" />
        <BrowserRow pad="pl-[94px]" tri="closed" icon={<FolderIcon />} text="South_Africa_100m_Population" tight="tracking-[-0.45px]" />
        <BrowserRow pad="pl-[95px]" icon={<RasterIcon />} text="after.png" />
        <BrowserRow pad="pl-[95px]" icon={<RasterIcon />} text="before.png" />
      </ScrollFrame>
      <PanelTitle text="Layers" className="mt-[10px] pr-[50px]" />
      <div className="flex h-[60px] items-center pb-1 pl-[4px]">
        <Slot>
          <Ico size="sm">
            <path d="M1 23L9 17L16 23L10 29Z" fill="#e23b3b" /><path d="M3 16L10 11L18 20L10 23Z" fill="#5a92d6" /><path d="M6 9L18 7L22 17L16 20Z" fill="#f6e04a" />
            <path d="M20 15L29 3" stroke="#e08a1a" strokeWidth="3" strokeLinecap="round" />
            <path d="M12 17L22 12L26 18L20 28L11 25Z" fill="#f3bf6a" stroke="#b97a20" /><path d="M15 19L18 26M19 17L21 24" stroke="#a9702a" />
          </Ico>
        </Slot>
        <Slot>
          <Ico size="sm">
            <path d="M3 17V29H16" stroke="#8f8f86" strokeWidth="2.200" fill="none" /><path d="M7 11V24H20" stroke="#d5d5cf" strokeWidth="2.500" fill="none" />
            <path d="M10 5H26V20H10Z" fill="#e9e9e6" stroke="#888" strokeWidth="1.500" />
            <path d="M21 7V17Q21 20 18 20Q15.500 20 15.500 17V4Q15.500 1 18 1Q20 1 20 4" stroke="#3a5a80" strokeWidth="2.200" fill="none" /><PlusBadge x={18} y={18} s={13} />
          </Ico>
        </Slot>
        <Slot>
          <Ico size="sm">
            <path d="M1 16Q15 2 31 17Q16 28 1 16Z" fill="#f2f2f2" stroke="#555" strokeWidth="1.200" /><path d="M2 11Q15 0 29 9" stroke="#8a8a80" fill="none" />
            <circle cx="16" cy="15" r="7" fill="#7fa8dc" stroke="#44699b" /><circle cx="16" cy="15" r="3" fill="#111" /><path d="M22 22H34L28 29Z" fill="#333" />
          </Ico>
        </Slot>
        <Slot><FilterIcon /></Slot>
        <Slot>
          <Ico size="sm" dim>
            <text x="7" y="18" textAnchor="middle" fontFamily="Liberation Serif, serif" fontStyle="italic" fontWeight="700" fontSize="36" fill="#222">ε</text>
            <rect x="16" y="17" width="14" height="13" fill="#aaa" /><path d="M18 19H29L25 24V30H22V24Z" fill="#eee" />
          </Ico>
        </Slot>
        <Drop className="w-[22px]" />
        <Slot className="w-[58px]"><TreeIcon /></Slot>
        <Slot className="w-[46px]"><TreeIcon up /></Slot>
        <More className="ml-[28px] w-6 opacity-80" />
      </div>
      <div className="relative">
        <ScrollFrame className="h-[412px]" vThumb="mt-[2px] h-[294px]" hThumb="w-[388px]">
          <div className="flex h-11 shrink-0 items-center bg-[#efefef] pl-[14px]">
            <Tri open /><Check on className="ml-5" /><div className="ml-4"><RasterIcon faded /></div>
            <span className="mt-[2px] ml-[13px] border-b border-[#111] text-[26px] leading-[27px] font-bold tracking-[0.1px] text-[#0c0c0c]">ZAF15v4</span>
            <div className="mr-[2px] ml-auto h-8 w-[6px] bg-[#909090]" />
          </div>
          <div className="flex h-11 shrink-0 items-center pb-[2px] pl-[86px] text-[26px] tracking-[-0.35px] text-[#0c0c0c]">
            <div className="mr-3 h-8 w-8 bg-black" />0
          </div>
          <div className="flex h-11 shrink-0 items-center pb-[2px] pl-[86px] text-[26px] tracking-[-0.35px] text-[#0c0c0c]">
            <div className="mr-3 h-8 w-8 bg-white" />70.8241
          </div>
          <div className="relative flex h-11 shrink-0 items-center pb-[1px] pl-[14px]">
            <Tri open /><Check on className="ml-5" /><div className="ml-3"><PolyIcon gray /></div>
            <span className="ml-3 text-[26px] font-bold tracking-[-0.05px] whitespace-nowrap text-[#0c0c0c]">gauteng_buglaries_2018</span>
            <div className="absolute top-[6px] right-[2px] h-8 w-[6px] bg-[#909090]/90" />
          </div>
          {classes.map((c) => (
            <div key={c.label} className="flex h-12 shrink-0 items-center pb-[1px] pl-[86px] text-[26px] tracking-[-0.1px] text-[#0c0c0c]">
              <Check on />
              <div className={"mr-3 ml-3 h-9 w-9 border-2 border-[#23232355] bg-clip-border " + c.fill} />
              {c.label}
            </div>
          ))}
        </ScrollFrame>
        <div className="absolute -top-[12px] left-[11px] h-[151px] w-[278px] rounded-[3px] border-[6px] border-[#ff2f6e]" />
      </div>
    </div>
  );
}

/* ---------- population raster ---------- */

type Region = { p: number[]; d: number; c: string };

/* areas kept free of settlement pixels: river bands, dams, mine belts */
const voids: number[][] = [
  [455, 505, 520, 512, 580, 545, 700, 535, 700, 556, 600, 560, 545, 566, 500, 545, 455, 522],
  [665, 405, 690, 405, 692, 440, 670, 448],
  [470, 590, 540, 596, 540, 604, 470, 600],
  [475, 650, 580, 645, 660, 670, 690, 720, 600, 800, 485, 800],
  [850, 300, 1000, 300, 1000, 400, 870, 420],
  [730, 380, 785, 370, 780, 420, 740, 440],
  [880, 610, 950, 620, 960, 680, 880, 690],
  [900, 560, 945, 575, 930, 590, 905, 580],
  [350, 690, 400, 690, 440, 705, 350, 712],
  [380, 780, 480, 790, 480, 798, 380, 796],
];

const lower: Region[] = [
  { p: [575, 290, 640, 335, 700, 370, 730, 440, 715, 530, 600, 545, 540, 520, 440, 495, 470, 440, 500, 400, 520, 340], d: 0.84, c: "#e2e2e2" },
  { p: [400, 385, 445, 390, 455, 500, 370, 510, 400, 450], d: 0.75, c: "#e2e2e2" },
  { p: [330, 520, 440, 512, 545, 570, 540, 640, 455, 645, 350, 605], d: 0.68, c: "#e2e2e2" },
  { p: [560, 560, 705, 560, 660, 655, 585, 665, 560, 610], d: 0.62, c: "#e2e2e2" },
  { p: [385, 648, 440, 648, 470, 700, 400, 680], d: 0.7, c: "#e2e2e2" },
  { p: [358, 715, 465, 705, 480, 770, 460, 795, 385, 770], d: 0.5, c: "#e2e2e2" },
  { p: [405, 800, 440, 800, 458, 875, 400, 850], d: 0.85, c: "#e2e2e2" },
  { p: [760, 290, 815, 290, 785, 370, 740, 360], d: 0.6, c: "#e2e2e2" },
  { p: [570, 225, 780, 210, 740, 310, 600, 300], d: 0.05, c: "#e2e2e2" },
  { p: [650, 320, 720, 330, 720, 420, 680, 380], d: 0.25, c: "#e2e2e2" },
  { p: [475, 350, 560, 310, 520, 400, 450, 430], d: 0.25, c: "#e2e2e2" },
  { p: [350, 480, 400, 440, 400, 520, 350, 530], d: 0.35, c: "#e2e2e2" },
  { p: [810, 250, 845, 260, 860, 410, 785, 425, 795, 300], d: 0.75, c: "#c0c0c0" },
  { p: [725, 440, 800, 430, 830, 560, 760, 610, 690, 620, 710, 520], d: 0.55, c: "#c0c0c0" },
  { p: [800, 420, 980, 440, 1000, 580, 880, 620, 840, 560], d: 0.36, c: "#c0c0c0" },
  { p: [870, 460, 950, 470, 910, 520], d: 0.85, c: "#c0c0c0" },
  { p: [1010, 485, 1060, 405, 1115, 410, 1112, 455, 1020, 495], d: 0.78, c: "#c0c0c0" },
  { p: [1000, 500, 1130, 540, 1110, 660, 1000, 690, 930, 600], d: 0.28, c: "#c0c0c0" },
  { p: [955, 690, 1010, 615, 1040, 720, 1005, 745, 950, 730], d: 0.82, c: "#c0c0c0" },
  { p: [718, 690, 835, 675, 833, 730, 760, 778, 715, 740], d: 0.82, c: "#c0c0c0" },
  { p: [665, 650, 725, 595, 700, 698], d: 0.8, c: "#c0c0c0" },
  { p: [750, 590, 880, 600, 870, 675, 735, 670], d: 0.42, c: "#c0c0c0" },
  { p: [1080, 765, 1120, 765, 1155, 798, 1130, 795, 1080, 784], d: 1, c: "#c0c0c0" },
  { p: [372, 850, 468, 870, 440, 930, 405, 975, 365, 965], d: 0.74, c: "#989898" },
  { p: [335, 1050, 460, 1035, 455, 1105, 410, 1125, 375, 1110], d: 0.68, c: "#989898" },
  { p: [440, 965, 540, 980, 595, 1030, 590, 1060, 440, 1035], d: 0.2, c: "#858585" },
  { p: [300, 380, 400, 400, 400, 440, 300, 425], d: 0.6, c: "#5c5c5c" },
  { p: [320, 468, 365, 470, 365, 505, 330, 505], d: 0.8, c: "#5c5c5c" },
  { p: [215, 490, 275, 460, 255, 610, 240, 600, 238, 520], d: 0.5, c: "#505050" },
  { p: [180, 645, 280, 600, 260, 670, 190, 670], d: 0.3, c: "#3c3c3c" },
  { p: [100, 800, 130, 690, 185, 700, 180, 740, 140, 760], d: 0.35, c: "#3c3c3c" },
  { p: [360, 1180, 400, 1175, 400, 1215, 370, 1210], d: 1, c: "#262626" },
  { p: [410, 1215, 455, 1240, 430, 1262], d: 0.9, c: "#262626" },
  { p: [395, 1140, 425, 1145, 420, 1170], d: 1, c: "#262626" },
  { p: [500, 1100, 560, 1110, 580, 1160, 520, 1140], d: 0.3, c: "#262626" },
  { p: [560, 900, 660, 880, 650, 915, 600, 950], d: 0.25, c: "#202020" },
  { p: [925, 830, 1000, 830, 1000, 890, 930, 940], d: 0.2, c: "#242424" },
  { p: [1310, 420, 1350, 410, 1345, 460, 1315, 480], d: 0.4, c: "#1c1c1c" },
  { p: [10, 820, 35, 830, 30, 860, 0, 865], d: 0.9, c: "#222222" },
  { p: [640, 55, 700, 20, 950, 0, 955, 140, 720, 140, 720, 90], d: 0.6, c: "#686868" },
  { p: [605, 85, 650, 50, 690, 55, 650, 80], d: 0.8, c: "#686868" },
  { p: [715, 130, 860, 130, 850, 190, 720, 210], d: 0.45, c: "#686868" },
  { p: [1350, 92, 1375, 65, 1410, 100, 1385, 128], d: 0.9, c: "#6f6f6f" },
];

const upper: Region[] = [
  { p: [868, 185, 890, 178, 920, 190, 918, 206, 880, 213], d: 1, c: "#4e4e4e" },
  { p: [825, 708, 870, 700, 895, 735, 890, 770, 855, 780, 828, 750], d: 0.8, c: "#6a6a6a" },
  { p: [870, 625, 885, 640, 892, 760, 882, 760, 878, 670], d: 0.9, c: "#555555" },
  { p: [700, 812, 765, 800, 772, 860, 752, 925, 745, 985, 700, 940, 660, 890, 665, 855], d: 0.66, c: "#6a6a6a" },
  { p: [640, 990, 690, 945, 660, 1005], d: 0.9, c: "#6a6a6a" },
  { p: [725, 1040, 860, 1028, 880, 1085, 760, 1085], d: 0.5, c: "#6a6a6a" },
  { p: [760, 1088, 985, 1088, 1000, 1125, 760, 1120], d: 0.75, c: "#6a6a6a" },
  { p: [710, 1130, 950, 1125, 920, 1180, 700, 1190], d: 0.5, c: "#6a6a6a" },
  { p: [750, 762, 830, 740, 790, 780], d: 0.7, c: "#202020" },
  { p: [748, 570, 765, 575, 772, 605, 755, 600], d: 1, c: "#2a2a2a" },
  { p: [535, 828, 550, 830, 560, 870, 580, 880, 560, 885, 538, 860], d: 0.95, c: "#2c2c2c" },
  { p: [268, 797, 300, 795, 298, 815, 275, 812], d: 1, c: "#333333" },
  { p: [495, 1030, 508, 970, 528, 1000, 510, 1010], d: 0.95, c: "#2c2c2c" },
  { p: [575, 970, 590, 980, 650, 990, 640, 1002, 580, 992], d: 0.9, c: "#2c2c2c" },
  { p: [405, 1100, 432, 1088, 430, 1140, 412, 1135], d: 0.9, c: "#2c2c2c" },
  { p: [368, 1045, 388, 1045, 385, 1065], d: 1, c: "#2c2c2c" },
  { p: [20, 500, 50, 468, 78, 530, 60, 530], d: 1, c: "#232323" },
  { p: [75, 530, 125, 512, 115, 550, 85, 568], d: 0.95, c: "#1a1a1a" },
  { p: [45, 305, 62, 300, 65, 320, 50, 322], d: 0.9, c: "#2c2c2c" },
  { p: [28, 225, 34, 225, 42, 240, 32, 262, 26, 250], d: 0.9, c: "#262626" },
  { p: [120, 92, 126, 78, 132, 80, 126, 96], d: 0.9, c: "#333333" },
  { p: [130, 120, 140, 120, 136, 136, 128, 134], d: 0.9, c: "#333333" },
  { p: [216, 96, 228, 96, 222, 108], d: 0.9, c: "#333333" },
  { p: [110, 268, 120, 264, 118, 288, 112, 282], d: 0.9, c: "#333333" },
  { p: [60, 650, 75, 605, 130, 595, 125, 620, 75, 640], d: 0.4, c: "#2c2c2c" },
  { p: [12, 940, 40, 930, 60, 1010, 20, 985], d: 0.6, c: "#383838" },
  { p: [65, 1020, 110, 1030, 100, 1110, 62, 1090], d: 0.6, c: "#424242" },
  { p: [100, 940, 160, 940, 150, 1020, 100, 1010], d: 0.2, c: "#383838" },
  { p: [150, 1040, 205, 1040, 200, 1110, 150, 1100], d: 0.1, c: "#303030" },
  { p: [46, 845, 58, 850, 64, 890, 50, 898], d: 0.9, c: "#3c3c3c" },
  { p: [1367, 632, 1395, 632, 1393, 670, 1388, 722, 1376, 700], d: 0.9, c: "#2e2e2e" },
  { p: [1410, 625, 1420, 630, 1445, 670, 1435, 675], d: 0.9, c: "#2e2e2e" },
  { p: [1465, 650, 1478, 645, 1475, 670], d: 1, c: "#2e2e2e" },
  { p: [1138, 812, 1158, 812, 1162, 835, 1145, 843], d: 1, c: "#2e2e2e" },
  { p: [1210, 1040, 1225, 1040, 1238, 1095, 1212, 1080], d: 0.9, c: "#6f6f6f" },
  { p: [1056, 1016, 1072, 1014, 1070, 1030, 1060, 1032], d: 0.9, c: "#6a6a6a" },
  { p: [1052, 1050, 1068, 1050, 1082, 1086, 1072, 1088], d: 0.9, c: "#6a6a6a" },
  { p: [1060, 1120, 1072, 1115, 1078, 1145], d: 1, c: "#6a6a6a" },
  { p: [1490, 365, 1508, 385, 1500, 388], d: 1, c: "#262626" },
  { p: [1140, 320, 1210, 350, 1215, 372, 1150, 370], d: 0.95, c: "#0e0e0e" },
  { p: [1235, 305, 1300, 300, 1290, 365, 1240, 350], d: 0.95, c: "#0e0e0e" },
  { p: [1300, 250, 1350, 240, 1330, 300, 1300, 295], d: 0.95, c: "#0e0e0e" },
  { p: [1350, 400, 1380, 350, 1378, 400], d: 0.95, c: "#111111" },
  { p: [1120, 410, 1165, 390, 1160, 425], d: 0.9, c: "#0e0e0e" },
  { p: [970, 520, 1000, 490, 1050, 480, 1010, 520], d: 0.8, c: "#101010" },
  { p: [1335, 550, 1350, 510, 1370, 550], d: 0.9, c: "#101010" },
  { p: [1000, 430, 1140, 300, 1250, 230, 1460, 235, 1480, 400, 1540, 640, 1300, 560, 1150, 560], d: 0.35, c: "#060606" },
  { p: [360, 300, 740, 300, 850, 380, 850, 600, 600, 700, 250, 620], d: 0.35, c: "#040404" },
  { p: [20, 720, 870, 560, 1140, 620, 1540, 900, 1380, 1260, 1420, 1400, 1200, 1620, 1050, 1500, 500, 1560, 400, 1750, 200, 1650, 10, 1450], d: 0.4, c: "#040404" },
];

/* regions given directly in map pixels */
const spots: Region[] = [
  { p: [722, 402, 738, 398, 740, 410, 728, 414], d: 0.8, c: "#606060" },
  { p: [696, 452, 701, 452, 699, 462, 695, 460], d: 1, c: "#8a8a8a" },
  { p: [712, 396, 720, 392, 720, 402], d: 0.8, c: "#8a8a8a" },
  { p: [717, 444, 738, 446, 738, 456, 728, 450], d: 0.5, c: "#707070" },
  { p: [720, 626, 727, 626, 726, 640, 720, 638], d: 0.9, c: "#606060" },
  { p: [708, 644, 718, 648, 716, 668, 706, 660], d: 0.6, c: "#606060" },
  { p: [666, 634, 678, 636, 676, 646, 668, 644], d: 0.4, c: "#3c3c3c" },
  { p: [538, 830, 548, 828, 548, 838, 540, 838], d: 0.9, c: "#343434" },
  { p: [498, 918, 508, 914, 504, 930, 498, 930], d: 0.95, c: "#7d7d7d" },
  { p: [304, 924, 312, 920, 314, 932, 306, 934], d: 0.9, c: "#161616" },
  { p: [52, 600, 130, 570, 150, 600, 100, 650, 60, 640], d: 0.12, c: "#2c2c2c" },
  { p: [82, 580, 96, 574, 104, 590, 86, 600], d: 0.5, c: "#343434" },
  { p: [76, 792, 86, 790, 84, 800], d: 0.9, c: "#1c1c1c" },
  { p: [162, 680, 200, 678, 250, 660, 270, 740, 210, 745, 164, 720], d: 0.55, c: "#090909" },
  { p: [340, 820, 420, 840, 440, 880, 380, 890], d: 0.5, c: "#050505" },
];

function inside(p: number[], x: number, y: number) {
  let hit = false;
  for (let i = 0, j = p.length - 2; i < p.length; j = i, i += 2) {
    if (p[i + 1] > y !== p[j + 1] > y && x < ((p[j] - p[i]) * (y - p[i + 1])) / (p[j + 1] - p[i + 1]) + p[i]) hit = !hit;
  }
  return hit;
}

function hash(x: number, y: number) {
  let h = (Math.imul(x, 374761393) + Math.imul(y, 668265263)) | 0;
  h = Math.imul(h ^ (h >>> 13), 1274126177);
  return ((h ^ (h >>> 16)) >>> 0) / 4294967296;
}

function smooth(x: number, y: number, size: number, seed: number) {
  const gx = Math.floor(x / size);
  const gy = Math.floor(y / size);
  const fx = x / size - gx;
  const fy = y / size - gy;
  const top = hash(gx + seed, gy) * (1 - fx) + hash(gx + 1 + seed, gy) * fx;
  const bottom = hash(gx + seed, gy + 1) * (1 - fx) + hash(gx + 1 + seed, gy + 1) * fx;
  return top * (1 - fy) + bottom * fy;
}

function buildRaster() {
  const scale = (r: Region, ox: number, oy: number, sx: number, sy: number): Region => ({
    ...r,
    p: r.p.map((v, i) => (i % 2 ? v / sy + oy : v / sx + ox)),
  });
  const all = [
    ...lower.map((r) => scale(r, 126, 356, 3, 3)),
    ...upper.slice(0, -3).map((r) => scale(r, -4, -14, 2.063, 3)),
    ...spots,
    ...upper.slice(-3).map((r) => scale(r, -4, -14, 2.063, 3)),
  ];
  const holes = voids.map((p) => p.map((v, i) => (i % 2 ? v / 3 + 356 : v / 3 + 126)));
  const taken = new Set<number>();
  const paths = new Map<string, string>();
  for (const r of all) {
    const xs = r.p.filter((_, i) => i % 2 === 0);
    const ys = r.p.filter((_, i) => i % 2 === 1);
    let d = paths.get(r.c) ?? "";
    const dark = r.c < "#1";
    const solid = r.d >= 0.9;
    const wide = dark ? 40 : solid ? 2 : 14;
    const fine = solid ? 3 : 6;
    const reach = solid ? 2 : 8;
    for (let y = Math.floor((Math.min(...ys) - reach) / 2) * 2; y <= Math.max(...ys) + reach; y += 2) {
      for (let x = Math.floor((Math.min(...xs) - reach) / 2) * 2; x <= Math.max(...xs) + reach; x += 2) {
        if (x < 0 || y < 0 || x >= 744 || y >= 974) continue;
        const key = y * 1000 + x;
        if (taken.has(key)) continue;
        const jx = (smooth(x, y, 10, 41) - 0.5) * wide + (hash(x + 3, y + 9) - 0.5) * fine;
        const jy = (smooth(x, y, 10, 977) - 0.5) * wide + (hash(x + 51, y) - 0.5) * fine;
        if (!inside(r.p, x + 1 + jx, y + 1 + jy)) continue;
        if (!dark && holes.some((h) => inside(h, x + 1, y + 1))) continue;
        const run = hash(x, y) < 0.5 ? hash((x >> 2) + 911, (y >> 1) + 37) : hash((x >> 1) + 87, (y >> 2) + 613);
        const v = hash(x + 700, y + 300) * 0.36 + run * 0.28 + smooth(x, y, 6, 300) * 0.36;
        const limit = solid ? 0.95 : 0.5 + (r.d - 0.5) * 0.5;
        if (v < limit) {
          taken.add(key);
          d += `M${x} ${y}h2v2h-2z`;
        }
      }
    }
    paths.set(r.c, d);
  }
  return [...paths.entries()];
}

const raster = buildRaster();

function MapCanvas() {
  return (
    <div className="mt-[3px] ml-[13px] h-[976px] w-[746px] shrink-0 border border-[#555] bg-black">
      <svg viewBox="0 0 744 974" className="h-full w-full" shapeRendering="crispEdges">
        {raster.map(([c, d]) => (<path key={c} d={d} fill={c} />))}
      </svg>
    </div>
  );
}

/* ---------- identify panel ---------- */

function Combo({ text, className }: { text: string; className: string }) {
  return (
    <div className={"flex h-12 shrink-0 items-center justify-between rounded-[5px] border-2 border-[#1e1e1e] bg-linear-to-b from-[#545454] to-[#383838] pr-[9px] text-[#b2b2b2] " + className}>
      {text}
      <svg viewBox="0 0 8 9" className="h-[9px] w-2"><path d="M0 0H8L4 9Z" fill="#c0c0c0" /></svg>
    </div>
  );
}

function Spin({ text, className }: { text: string; className: string }) {
  return (
    <div className={"flex h-12 shrink-0 items-center justify-between rounded-[5px] border-2 border-[#1e1e1e] bg-linear-to-b from-[#545454] to-[#383838] pr-[9px] pl-[7px] text-[23px] tracking-[-0.6px] text-[#b2b2b2] " + className}>
      <span className="pt-[2px]">{text}</span>
      <svg viewBox="0 0 8 32" className="h-8 w-2"><path d="M0 8H8L4 0ZM0 24H8L4 32Z" fill="#b2b2b2" /></svg>
    </div>
  );
}

function IdentifyPanel() {
  return (
    <div className="flex min-w-0 flex-1 flex-col pl-[13px]">
      <PanelTitle text="Identify Results" className="pr-[50px]" />
      <div className="flex h-[60px] items-center pb-1 pl-[4px]">
        <Slot>
          <Ico size="sm" dim>
            <rect x="3" y="3" width="26" height="26" fill="#b5b8b8" stroke="#bbb" strokeWidth="2" />
            <path d="M6 11H12M6 21H12" stroke="#444" strokeWidth="3" /><rect x="15" y="8" width="10" height="6" fill="none" stroke="#eee" strokeWidth="2" /><rect x="15" y="18" width="10" height="6" fill="none" stroke="#eee" strokeWidth="2" />
          </Ico>
        </Slot>
        <Sep className="w-[8px]" />
        <Slot><TreeIcon /></Slot>
        <Slot><TreeIcon up /></Slot>
        <Slot>
          <div className="flex">
            <TreeIcon />
            <div className="-ml-[34px] -mt-[3px]"><Ico size="sm"><path d="M12 2L15 9L22 9.500L17 14L19 22L12 18L5 22L7 14L2 9.500L9 9Z" fill="#fff" stroke="#fff" strokeWidth="5" strokeLinejoin="round" /><path d="M12 2L15 9L22 9.500L17 14L19 22L12 18L5 22L7 14L2 9.500L9 9Z" fill="#fff200" stroke="#f58a00" strokeWidth="2" strokeLinejoin="round" /></Ico></div>
          </div>
        </Slot>
        <Sep className="w-[10px]" />
        <Slot><Ico size="sm"><rect x="2" y="3" width="17" height="17" fill="#fde73a" stroke="#c9a400" strokeWidth="2" /><NoBadge x={16} y={17} s={14} /></Ico></Slot>
        <Sep className="w-[6px]" />
        <Slot><Ico size="sm" dim><g transform="scale(.66)"><Doc x={18} y={5} /><Doc x={8} y={13} /></g></Ico></Slot>
        <Slot>
          <Ico size="sm" dim>
            <rect x="10" y="2" width="12" height="9" fill="#ccc" /><rect x="4" y="11" width="24" height="10" rx="2" fill="#a5adb5" stroke="#8a9299" /><rect x="9" y="17" width="14" height="12" fill="#ddd" stroke="#555" /><path d="M12 21H20M12 25H20" stroke="#555" />
          </Ico>
        </Slot>
        <Slot>
          <Ico size="sm"><rect x="2" y="2" width="28" height="26" fill="#e4e4e4" stroke="#444" strokeWidth="1.600" strokeDasharray="3 1.500" /><InfoDisc cx={10} cy={10} r={9} /><Cursor x={14} y={13} s={0.75} /></Ico>
        </Slot>
        <Drop className="w-[22px]" />
      </div>
      <div className="relative h-[746px] w-[705px] shrink-0 rounded-[4px] border-2 border-[#383838] bg-[#b2b2b2]">
        <div className="mx-[4px] mt-[4px] mr-[4px] flex h-9 border-b-2 border-[#383838] bg-[#727272] text-[22px] text-[#0c0c0c]">
          <div className="flex w-[382px] items-center border-r-2 border-[#383838] pb-1 pl-[6px]">Feature</div>
          <div className="flex items-center pb-1 pl-[6px] tracking-[-0.2px]">Value</div>
        </div>
        <div className="mr-[6px] ml-[2px] text-[25px] tracking-[0.2px] text-[#0c0c0c]">
          <div className="flex h-[34px] items-center pt-[3px] pl-[14px]"><div className="w-[32px]"><Tri open /></div><div className="w-[342px]">0</div>ZAF15v4</div>
          <div className="flex h-8 items-center bg-[#efefef] pt-[1px] pl-[54px]"><div className="w-[32px]"><Tri open /></div>ZAF15v4</div>
          <div className="flex h-8 items-center pt-[1px] pl-[126px]"><div className="w-[262px]">Band 1</div><span className="tracking-[0.5px]">62.717747</span></div>
          <div className="flex h-8 items-center bg-[#989898] pt-[1px] pl-[94px]"><div className="w-[32px]"><Tri /></div><span className="tracking-normal">(Derived)</span></div>
        </div>
        <div className="absolute top-[98px] left-[112px] h-[45px] w-[427px] rounded-[3px] border-[6px] border-[#ff2f6e]" />
      </div>
      <div className="mt-[10px] flex items-center pl-[10px] text-[26px] tracking-[-0.45px] whitespace-nowrap text-[#0c0c0c]">
        <div className="w-[82px] shrink-0">Mode</div>
        <Combo text="Current layer" className="w-[348px] pl-[6px]" />
        <Check className="mr-[13px] ml-[25px]" />
        Auto open form
      </div>
      <div className="mt-[14px] flex items-center pr-[10px] pl-[10px] text-[26px] tracking-[-0.6px] text-[#0c0c0c]">
        <div className="w-[72px] shrink-0">View</div>
        <Combo text="Tree" className="w-[176px] pl-[6px]" />
        <div className="ml-auto flex h-[42px] w-[76px] items-center justify-center rounded-[6px] border-2 border-[#383838] bg-linear-to-b from-[#a2a2a2] to-[#878787] text-[21px] font-medium tracking-[-0.4px]">Help</div>
      </div>
    </div>
  );
}

/* ---------- status bar ---------- */

function StatusBar() {
  return (
    <div className="flex h-[60px] items-center pb-0 text-[23px] text-[#0c0c0c]">
      <div className="ml-[8px] flex h-12 w-[434px] shrink-0 items-center rounded-[6px] border-2 border-[#383838] bg-[#b2b2b2] pl-[14px] text-[26px] tracking-[-0.3px] text-[#666]">
        <svg viewBox="0 0 30 30" className="mr-[16px] h-[30px] w-[30px]"><circle cx="12" cy="12" r="9.500" fill="none" stroke="#8c8c8c" strokeWidth="2" /><path d="M19 19L27 27" stroke="#8c8c8c" strokeWidth="3" /></svg>
        Type to locate (⌘K)
      </div>
      <div className="ml-[60px] flex w-[9px] justify-end overflow-hidden pt-[1px] text-[22px]">d</div>
      <div className="ml-[5px] flex h-11 w-[198px] shrink-0 items-center rounded-[6px] border-2 border-[#383838] bg-[#b2b2b2] pt-[1px] pl-3 tracking-[-0.5px]">28.306,-26.033</div>
      <svg viewBox="0 0 30 34" className="ml-2 h-[34px] w-[30px] shrink-0">
        <ellipse cx="20" cy="24" rx="9.500" ry="9" fill="#b9a0a0" />
        <rect x="3" y="1" width="13" height="19" rx="6" transform="rotate(-22 9 10)" fill="#fff" stroke="#111" strokeWidth="2.400" />
        <path d="M8 4L12 14" stroke="#111" strokeWidth="2.600" />
        <ellipse cx="18" cy="23" rx="8" ry="9" fill="#fff" stroke="#111" strokeWidth="2.400" />
        <path d="M9 17Q15 11 23 14" stroke="#111" strokeWidth="4" fill="none" />
        <ellipse cx="18" cy="25" rx="2.800" ry="3.500" fill="#fff" stroke="#111" strokeWidth="2.500" />
        <path d="M20 9L28 3M2 20L1 24" stroke="#222" strokeWidth="2" strokeDasharray="2 2" />
      </svg>
      <div className="ml-[29px] flex w-[10px] shrink-0 justify-end overflow-hidden pt-[1px] text-[19px]"><span>:a</span></div>
      <Combo text="1:2445468" className="ml-[5px] w-[206px] pt-[1px] pl-[9px] tracking-[-0.5px]" />
      <svg viewBox="0 0 24 30" className="ml-6 h-[30px] w-6 shrink-0">
        <path d="M5 15V9Q5 2 12 2Q19 2 19 9V15" stroke="#dcdcdc" strokeWidth="2.400" fill="none" /><rect y="14" width="24" height="16" rx="2" fill="#5e5e5e" />
      </svg>
      <div className="ml-5 w-[9px] pt-[1px] text-[23px]">r</div>
      <Spin text="100%" className="ml-[5px] w-[192px]" />
      <div className="ml-[17px] flex w-[9px] justify-end overflow-hidden pt-[1px] text-[22px]">a</div>
      <Spin text="0.0 °" className="ml-[18px] w-[184px]" />
      <Check on className="mr-[12px] ml-[13px]" />
      <span className="w-[88px] shrink-0 pt-[1px] text-[22px]">Render</span>
      <svg viewBox="0 0 28 28" className="ml-[14px] h-7 w-7 shrink-0">
        <path d="M14 0L20 4H8Z" fill="#666" /><circle cx="14" cy="14" r="11.500" fill="#d8d8d8" /><path d="M1 14H27M14 2V26M4 8H24M4 20H24M14 2Q4 14 14 26M14 2Q24 14 14 26" stroke="#727272" strokeWidth="1.700" fill="none" />
      </svg>
      <span className="ml-[6px] w-[122px] shrink-0 pt-[1px] text-[22px] whitespace-nowrap">EPSG:4326</span>
      <svg viewBox="0 0 32 32" className="ml-[45px] h-8 w-8 shrink-0">
        <path d="M16 1C24 1 31 6 31 13C31 17 29 20 26 22Q26 27 29 31Q22 29 20 25C9 27 1 21 1 13C1 6 8 1 16 1Z" fill="#626262" />
        <circle cx="9" cy="13" r="2.500" fill="#fff" /><circle cx="16" cy="13" r="2.500" fill="#fff" /><circle cx="23" cy="13" r="2.500" fill="#fff" />
      </svg>
    </div>
  );
}

/* ---------- page ---------- */

const menus: [string, string][] = [
  ["Project", "w-[127px]"],
  ["Edit", "w-[87px]"],
  ["View", "w-[100px]"],
  ["Layer", "w-[108px]"],
  ["Settings", "w-[143px]"],
  ["Plugins", "w-[132px]"],
  ["Vector", "w-[122px]"],
  ["Raster", "w-[121px]"],
  ["Database", "w-[160px]"],
  ["Web", "w-[96px]"],
  ["Mesh", "w-[108px]"],
  ["Processing", "w-[180px]"],
  ["Window", "w-[139px]"],
  ["Help", "w-[80px]"],
];

export default function App() {
  return (
    <div className="flex h-[1362px] w-[1952px] flex-col overflow-hidden bg-[#b9bcbc] font-['Inter',sans-serif] font-[450]">
      <div className="z-10 flex h-11 shrink-0 items-center bg-[#555555] pl-[30px] text-[26px] font-[550] tracking-[0.2px] text-white">
        <div className="w-[107px] shrink-0 font-extrabold tracking-[1px]">QGIS</div>
        {menus.map(([m, w]) => (<div key={m} className={"shrink-0 " + w}>{m}</div>))}
      </div>
      <div className="flex-1 bg-linear-to-b from-[#cfcfcf] via-[#b4b7b7] to-[#a6a8a8] pt-[7px] pl-[13px]">
        <div className="relative flex h-[1290px] w-[1926px] flex-col overflow-hidden rounded-[11px] border border-black bg-[#727272] shadow-[0_18px_28px_6px_rgba(0,0,0,0.42)]">
          <div className="relative flex h-[46px] shrink-0 items-center border-b border-[#7a7a7a] bg-linear-to-b from-[#5a5a5a] to-[#505050] pl-4">
            <div className="-mt-[2px] flex gap-4">
              <div className="h-6 w-6 rounded-full bg-[#fc5b57]" />
              <div className="h-6 w-6 rounded-full bg-[#e5bf2c]" />
              <div className="h-6 w-6 rounded-full bg-[#57c22b]" />
            </div>
            <div className="flex-1 pt-[1px] pr-[120px] text-center text-[25px] tracking-[0.1px] text-[#b4b4b4]">*crime - QGIS</div>
          </div>
          <div className="flex h-[48px] shrink-0 items-center justify-center border-b border-black bg-linear-to-b from-[#505050] to-[#464646] pt-[1px] pr-[1px] text-[22px] font-medium text-white">
            *crime - QGIS
          </div>
          <ToolbarOne />
          <ToolbarTwo />
          <div className="flex h-[980px] shrink-0">
            <LeftColumn />
            <MapCanvas />
            <IdentifyPanel />
          </div>
          <StatusBar />
          <div className="pointer-events-none absolute inset-0 rounded-[10px] shadow-[inset_0_0_0_1.500px_#8c8c8c]" />
        </div>
      </div>
    </div>
  );
}
